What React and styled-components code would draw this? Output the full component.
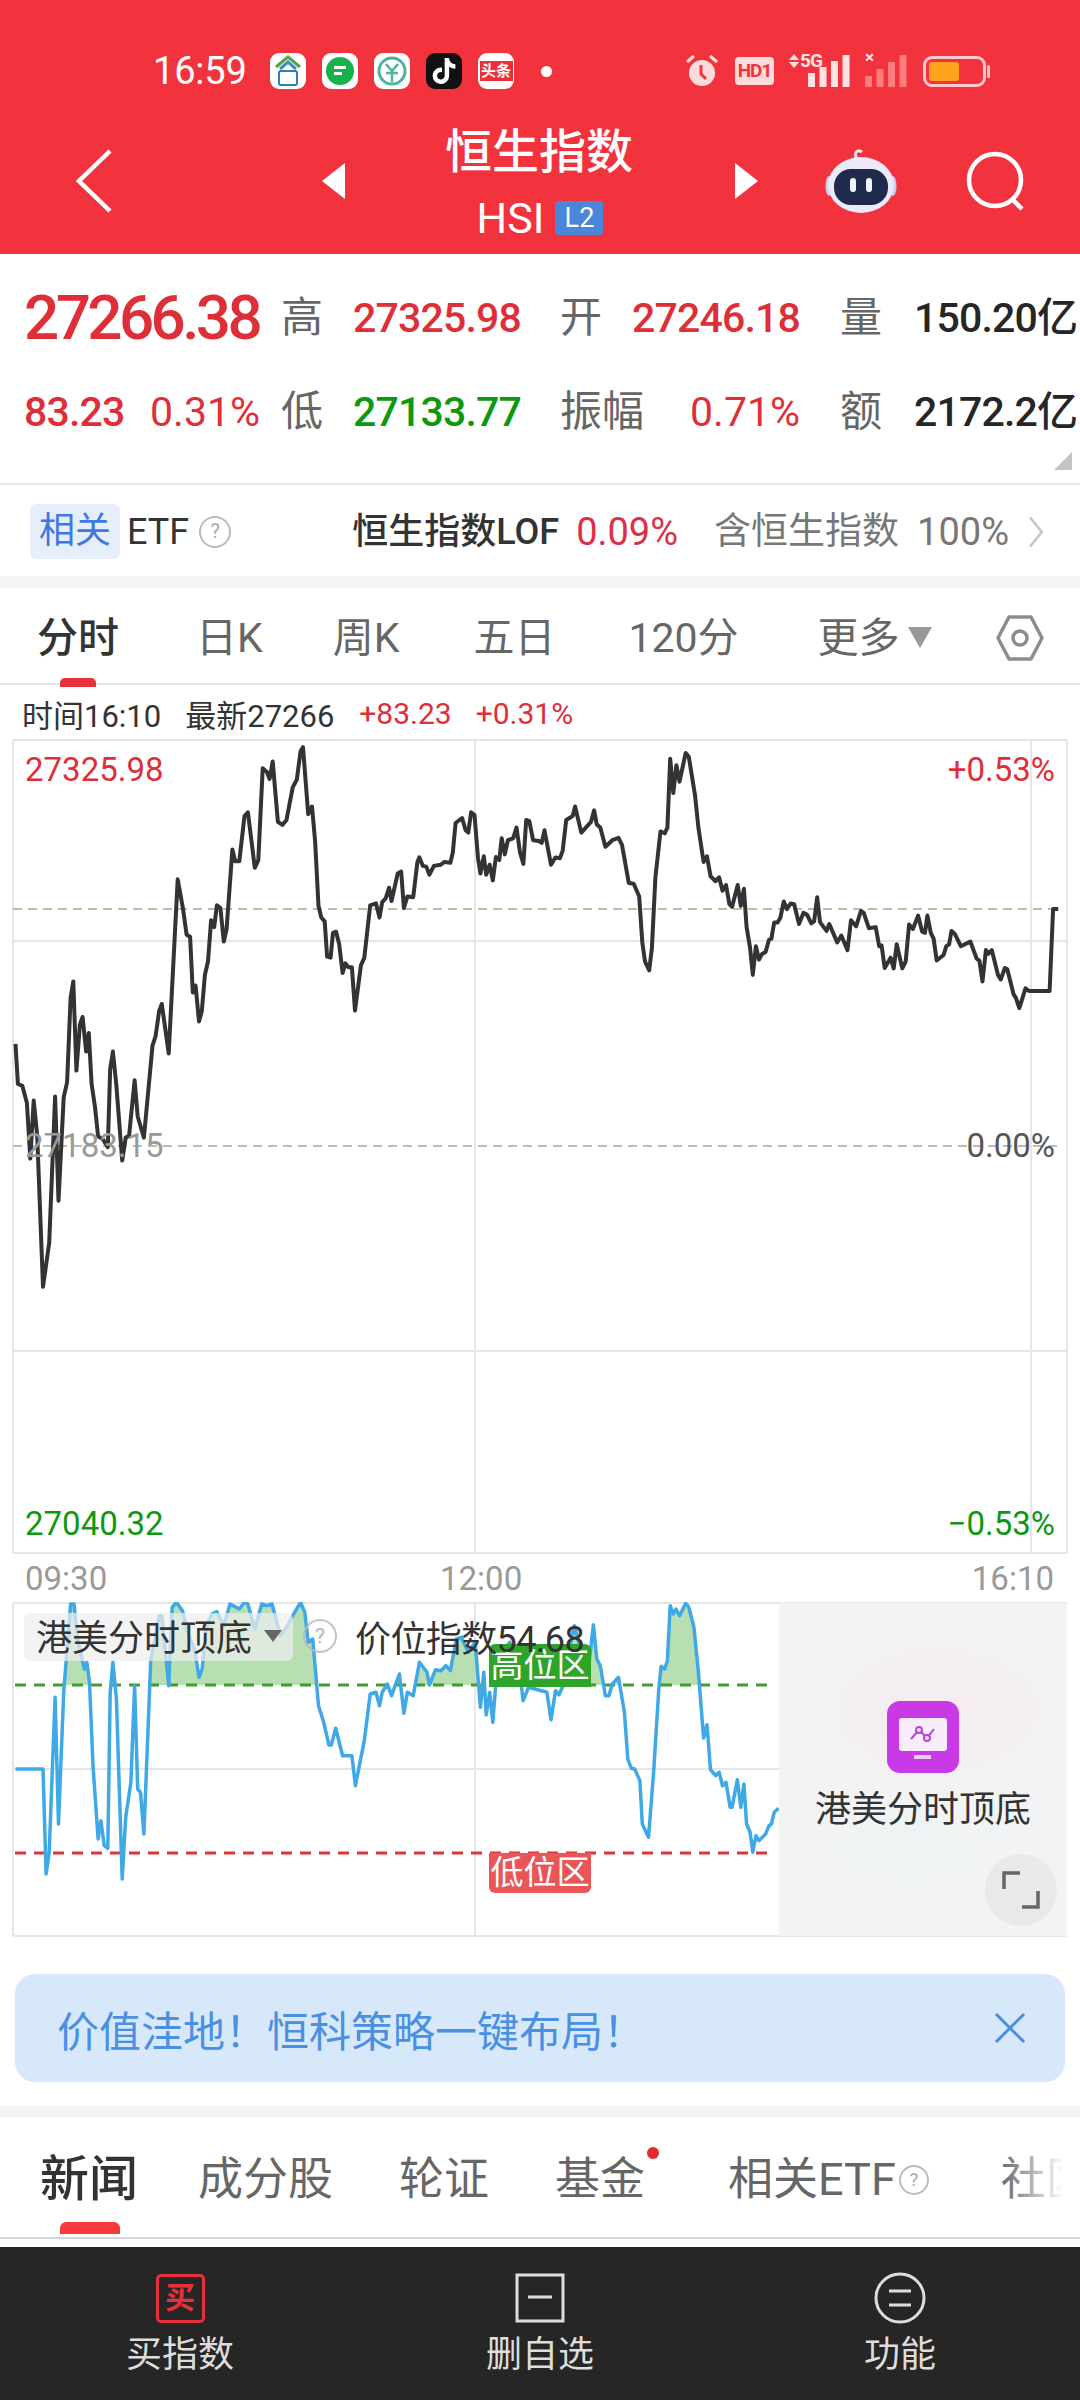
import React from "react"
import styled, { createGlobalStyle } from 'styled-components'
import { FaTiktok } from 'react-icons/fa6'

const FONT = `Roboto, "Noto Sans CJK SC", sans-serif`

const GlobalStyle = createGlobalStyle`
    html, body {
        margin: 0;
        padding: 0;
        background: #fff;
    }
    * {
        box-sizing: border-box;
    }
`

// traced from the reference, in crop pixels. x / 2.904, y / 2.613 + 730
const LEFT_PRICE = `45,820 52,925 65,930 78,975 88,1120 98,968 108,1060 125,1455 143,1340 160,958 170,1230 185,960 195,920 205,700 213,657 222,890 232,770 240,750 250,840 258,792 266,925 276,985 285,1062 298,1068 313,1090 320,885 328,840 338,930 355,1125 365,1065 375,1060 391,915 400,1010 418,1065 443,825 452,800 462,735 470,716 490,845 516,390 532,470 542,535 552,540 560,686 568,668 578,762 586,735 595,640 604,605 613,497 622,515 630,458 640,465 650,553 658,520 675,312 683,343 695,343 710,225 720,215 740,360 750,340 763,100 775,110 783,128 792,82 807,240 820,248 832,235 850,150 862,130 873,55 880,45 895,220 906,200 915,290 925,460 933,490 943,500 950,592 960,595 967,530 976,527 985,560 995,635 1003,610 1012,620 1022,620 1031,733 1048,615 1058,595 1075,458 1092,453 1102,490 1110,450 1120,440 1130,412 1137,447 1155,375 1165,370 1173,465 1183,435 1200,437 1212,345 1218,333 1228,355 1238,357 1247,378 1260,355 1280,352 1290,345 1308,347 1315,320 1323,243 1342,230 1352,262 1360,268 1368,215 1378,222 1388,335 1395,375 1405,330 1412,378 1422,352 1431,393 1440,332 1450,340 1457,283 1466,325 1475,288 1490,283 1500,255 1510,320 1520,350 1528,235 1537,238 1548,288 1565,290`
const RIGHT_PRICE = `5,295 13,262 32,352 45,333 58,335 66,315 76,235 95,225 102,200 120,268 148,240 157,210 165,247 175,255 190,305 210,288 228,282 238,300 258,400 272,402 288,435 297,555 305,605 317,628 325,570 335,385 350,265 362,270 370,255 378,75 387,165 396,92 405,135 423,60 432,70 450,170 460,255 475,345 485,330 495,382 510,395 520,385 530,420 540,405 550,455 558,462 574,405 583,460 592,415 600,515 610,570 618,640 627,565 636,600 645,585 655,580 665,548 672,545 680,503 690,503 698,490 708,448 717,468 728,453 738,455 752,507 765,478 775,482 788,505 796,500 805,437 813,502 832,525 840,507 863,555 875,537 893,575 903,497 918,513 932,473 940,478 955,518 975,515 985,565 992,563 1001,622 1018,595 1027,623 1036,560 1052,623 1062,605 1072,508 1083,520 1098,485 1110,527 1118,530 1125,485 1135,530 1143,545 1152,602 1172,588 1180,565 1188,560 1195,525 1205,533 1222,565 1250,553 1268,597 1276,603 1285,657 1295,575 1302,585 1312,575 1330,640 1338,652 1350,622 1357,625 1375,690 1382,700 1392,727 1410,675 1420,682 1480,682 1490,468 1505,468`
const LEFT_INDEX = `45,630 125,630 134,945 143,880 160,415 170,795 185,400 205,135 215,135 225,240 245,330 252,310 260,370 270,620 285,840 293,785 303,860 313,868 320,400 328,310 338,420 355,960 365,775 380,670 391,380 400,690 408,700 418,825 438,300 450,240 462,170 470,170 490,380 500,145 512,130 530,155 545,220 565,270 578,355 587,330 600,200 615,165 630,158 650,200 668,135 695,150 710,130 720,135 740,210 760,135 775,140 790,135 815,230 835,200 850,170 873,130 885,160 895,250 908,240 925,440 940,490 955,558 962,558 975,508 995,590 1022,590 1032,680 1058,545 1075,405 1092,400 1102,440 1110,400 1125,375 1137,410 1160,345 1173,463 1183,400 1200,410 1218,310 1240,340 1247,378 1265,332 1280,335 1295,320 1308,335 1325,240 1340,235 1360,280 1380,250 1395,445 1405,340 1412,468 1422,400 1431,490 1440,370 1450,300 1480,250 1505,300 1519,425 1535,385`
const RIGHT_INDEX = `20,400 32,482 45,395 55,408 65,385 80,300 100,200 115,260 135,380 155,197 165,300 175,320 190,410 200,410 210,375 228,355 245,460 255,600 265,628 275,630 290,665 297,795 315,835 330,640 345,390 352,322 362,330 370,305 378,140 387,165 395,150 405,170 423,133 432,145 447,205 460,340 475,537 485,497 495,632 510,650 520,640 530,680 540,670 552,745 558,745 573,662 583,745 592,675 600,795 610,820 618,880 627,830 636,845 655,825 665,800 672,795 680,760 693,748`

const mapPoints = (raw, offsetX, offsetY, scaleY) => raw.split(' ').map(p => {
    const [x, y] = p.split(',').map(Number)
    return `${(offsetX + x / 2.904).toFixed(1)},${(offsetY + y / scaleY).toFixed(1)}`
})

// both charts are drawn in page coordinates through their viewBox
const pricePoints = [...mapPoints(LEFT_PRICE, 0, 730, 2.613), ...mapPoints(RIGHT_PRICE, 540, 730, 2.613)].join(' ')
const indexList = [...mapPoints(LEFT_INDEX, 0, 1560, 3), ...mapPoints(RIGHT_INDEX, 540, 1560, 3)]
const indexPoints = indexList.join(' ')
const indexArea = `${indexList.join(' ')} 779,1686 15,1686`

const Page = styled.div`
    width: 1080px;
    height: 2400px;
    overflow: hidden;
    background: #fff;
    font-family: ${FONT};
    color: #333;
`

const Header = styled.header`
    height: 254px;
    background: #f2333d;
    color: #fff;
    overflow: hidden;
`

const StatusBar = styled.div`
    display: flex;
    align-items: center;
    height: 38px;
    margin-top: 52px;
    padding-left: 153px;
`

const Clock = styled.span`
    font-size: 38px;
    line-height: 38px;
    width: 117px;
    letter-spacing: -0.2px;
`

const AppIcons = styled.div`
    display: flex;
    gap: 16px;
`

const AppIcon = styled.span`
    width: 36px;
    height: 36px;
    border-radius: 9px;
    background: ${p => p.$bg || '#fff'};
    display: flex;
    align-items: center;
    justify-content: center;
    color: #fff;
    overflow: hidden;
`

const NewsChip = styled.span`
    width: 33px;
    height: 20px;
    font-size: 15px;
    line-height: 20px;
    font-weight: 700;
    text-align: center;
    color: #fff;
    background: #ee2f37;
    white-space: nowrap;
`

const AppDot = styled.span`
    width: 11px;
    height: 11px;
    border-radius: 50%;
    background: #fff;
    margin-left: 27px;
`

const StatusRight = styled.div`
    display: flex;
    align-items: center;
    margin-left: 133px;
`

const HdTag = styled.span`
    width: 39px;
    height: 28px;
    margin-left: 16px;
    border-radius: 4px;
    background: #ffdcdc;
    color: #f2333d;
    font-size: 19px;
    line-height: 28px;
    font-weight: 700;
    text-align: center;
    letter-spacing: -1px;
`

const SignalWrap = styled.span`
    position: relative;
    width: 61px;
    height: 32px;
    margin-left: 15px;
`

const SignalLabel = styled.span`
    position: absolute;
    left: 11px;
    top: -4px;
    font-size: 19px;
    line-height: 20px;
    font-weight: 700;
    color: #ffe2e2;
    letter-spacing: -0.8px;
`

const SignalArrows = styled.span`
    position: absolute;
    left: 0;
    top: -1px;
    display: flex;
    flex-direction: column;
    gap: 2px;

    &::before, &::after {
        content: "";
        width: 0;
        height: 0;
        border-left: 5px solid transparent;
        border-right: 5px solid transparent;
    }

    &::before {
        border-bottom: 6px solid #ffe2e2;
    }

    &::after {
        border-top: 6px solid #ffe2e2;
    }
`

const NoSignalWrap = styled.span`
    position: relative;
    display: flex;
    margin-left: 14px;
`

const NoSignalMark = styled.span`
    position: absolute;
    left: 1px;
    top: -7px;
    font-size: 17px;
    line-height: 18px;
    font-weight: 700;
    color: #ffe2e2;
`

const Battery = styled.span`
    position: relative;
    width: 63px;
    height: 31px;
    margin-left: 16px;
    border: 3px solid #ffc9c9;
    border-radius: 9px;
    padding: 3px;
    display: block;

    &::before {
        content: "";
        display: block;
        width: 30px;
        height: 19px;
        background: #ffa41c;
        border-radius: 3px;
    }

    &::after {
        content: "";
        position: absolute;
        right: -7px;
        top: 6px;
        width: 3px;
        height: 13px;
        background: #ffc9c9;
        border-radius: 2px;
    }
`

const NavBar = styled.nav`
    display: flex;
    align-items: center;
    margin-top: 37px;
    height: 108px;
    padding-left: 76px;
`

const Arrow = styled.span`
    width: 0;
    height: 0;
    border-top: 18px solid transparent;
    border-bottom: 18px solid transparent;
    ${p => p.$left
        ? 'border-right: 23px solid #fff; margin-left: 210px;'
        : 'border-left: 23px solid #fff;'}
`

const TitleBlock = styled.div`
    width: 390px;
    display: flex;
    flex-direction: column;
    align-items: center;
`

const Title = styled.h1`
    margin: 0 0 0 -2px;
    font-size: 47px;
    line-height: 50px;
    font-weight: 500;
`

const SubTitle = styled.div`
    display: flex;
    align-items: center;
    gap: 11px;
    margin-top: 24px;
    height: 34px;
    font-size: 43px;
    line-height: 34px;
`

const Level = styled.span`
    width: 48px;
    height: 34px;
    background: #4c86d9;
    border-radius: 3px;
    font-size: 27px;
    line-height: 34px;
    text-align: center;
`

const RobotWrap = styled.span`
    margin-left: 67px;
    display: flex;
`

const SearchWrap = styled.span`
    margin-left: 69px;
    display: flex;
`

const Quote = styled.section`
    position: relative;
    height: 231px;
    padding-top: 17px;
    border-bottom: 2px solid #e8e8e8;
`

const QuoteRow = styled.div`
    display: grid;
    grid-template-columns: 255px 72px 207px 240px 278px;
    height: 94px;
    align-items: center;
    padding-left: 26px;
`

const bump = { red: '#de2f38', green: '#0d990f', dark: '#262626' }

const BigPrice = styled.span`
    margin-left: -2px;
    font-size: 62px;
    line-height: 70px;
    font-weight: 500;
    color: ${bump.red};
    letter-spacing: -3.6px;
`

const ChangePair = styled.div`
    display: flex;
    justify-content: space-between;
    margin-left: -2px;
    padding-right: 21px;
`

const Num = styled.span`
    font-size: 41px;
    line-height: 50px;
    font-weight: ${p => p.$bold ? 500 : 400};
    letter-spacing: ${p => p.$bold ? '-0.8px' : '0'};
    color: ${p => bump[p.$tone] || bump.dark};
    white-space: nowrap;
`

const Unit = styled.span`
    letter-spacing: 0;
    font-size: 41px;
`

const QLabel = styled.span`
    font-size: 42px;
    line-height: 50px;
    color: #666;
    white-space: nowrap;
`

const Pair = styled.div`
    display: flex;
    justify-content: space-between;
    padding-left: ${p => p.$inset || 0}px;
`

const CornerMark = styled.span`
    position: absolute;
    right: 8px;
    bottom: 13px;
    width: 0;
    height: 0;
    border-bottom: 18px solid #c4c4c4;
    border-left: 18px solid transparent;
`

const EtfRow = styled.div`
    display: flex;
    align-items: center;
    height: 91px;
    padding: 2px 0 0 30px;
    font-size: 36px;
`

const EtfBadge = styled.span`
    width: 90px;
    height: 55px;
    background: #e6eefc;
    border-radius: 6px;
    color: #3f78e3;
    line-height: 55px;
    text-align: center;
`

const EtfText = styled.span`
    color: ${p => p.$color || '#333'};
    margin-left: ${p => p.$ml || 0}px;
    font-size: ${p => p.$size || 36}px;
    white-space: nowrap;
    line-height: 44px;
    font-weight: ${p => p.$bold ? 500 : 400};
`

const Help = styled.span`
    flex: none;
    display: inline-flex;
    align-items: center;
    justify-content: center;
    width: ${p => p.$size || 32}px;
    height: ${p => p.$size || 32}px;
    margin-left: ${p => p.$ml || 0}px;
    border: 2px solid #bbb;
    border-radius: 50%;
    color: #aaa;
    font-size: ${p => (p.$size || 32) * 0.62}px;
    line-height: 1;
`

const Chevron = styled.span`
    width: 22px;
    height: 22px;
    margin-left: 11px;
    border-top: 3px solid #c6c6c6;
    border-right: 3px solid #c6c6c6;
    transform: scaleX(0.8) rotate(45deg);
`

const Band = styled.div`
    height: ${p => p.$h}px;
    background: #f4f4f4;
`

const PeriodBar = styled.div`
    position: relative;
    display: flex;
    align-items: center;
    height: 97px;
    padding: 4px 0 0 37px;
    border-bottom: 2px solid #e6e6e6;
`

const PeriodTab = styled.span`
    position: relative;
    margin-left: ${p => p.$ml || 0}px;
    font-size: 41px;
    line-height: 50px;
    color: ${p => p.$active ? '#333' : '#666'};
    font-weight: ${p => p.$active ? 500 : 400};
    white-space: nowrap;

    ${p => p.$active && `
        &::after {
            content: "";
            position: absolute;
            left: 23px;
            bottom: -24px;
            width: 36px;
            height: 9px;
            border-radius: 5px 5px 0 0;
            background: #e8303a;
        }
    `}
`

const MoreArrow = styled.span`
    width: 0;
    height: 0;
    margin-left: 8px;
    border-left: 12px solid transparent;
    border-right: 12px solid transparent;
    border-top: 21px solid #999;
`

const HexWrap = styled.span`
    display: flex;
    margin-left: 64px;
`

const InfoLine = styled.div`
    display: flex;
    align-items: center;
    height: 54px;
    padding: 2px 0 0 22px;
    font-size: 31px;
    white-space: nowrap;
`

const InfoText = styled.span`
    margin-left: ${p => p.$ml || 0}px;
    color: ${p => p.$red ? '#de2f38' : '#333'};
    font-size: ${p => p.$red ? 30 : 31}px;
`

const PriceChart = styled.div`
    position: relative;
    height: 815px;
`

const Plot = styled.svg`
    position: absolute;
    left: 0;
    top: 0;
    display: block;
`

const AxisLabel = styled.span`
    position: absolute;
    font-size: 33px;
    line-height: 40px;
    color: ${p => p.$color};
    ${p => p.$side === 'right' ? 'right: 25px;' : 'left: 25px;'}
    top: ${p => p.$top}px;
`

const TimeAxis = styled.div`
    display: grid;
    grid-template-columns: 415px 1fr auto;
    align-items: center;
    height: 48px;
    padding: 0 26px 0 25px;
    font-size: 33px;
    color: #999;
`

const IndexChart = styled.div`
    position: relative;
    height: 335px;
`

const IndexChip = styled.div`
    position: absolute;
    left: 24px;
    top: 11px;
    display: flex;
    align-items: center;
    width: 269px;
    height: 48px;
    padding: 4px 0 0 12px;
    border-radius: 6px;
    background: rgba(238, 238, 238, 0.72);
    font-size: 36px;
    line-height: 44px;
    color: #333;
    white-space: nowrap;
`

const ChipArrow = styled.span`
    width: 0;
    height: 0;
    margin: -6px 0 0 12px;
    border-left: 9px solid transparent;
    border-right: 9px solid transparent;
    border-top: 12px solid #666;
`

const ChipHelp = styled(Help)`
    position: absolute;
    left: 303px;
    top: 17px;
    opacity: 0.85;
`

const IndexValue = styled.span`
    position: absolute;
    left: 355px;
    top: 16px;
    font-size: 36px;
    line-height: 44px;
    color: #333;
    white-space: nowrap;
    z-index: 2;
    letter-spacing: -0.6px;
`

const ZoneTag = styled.span`
    position: absolute;
    left: 489px;
    top: ${p => p.$top}px;
    width: 102px;
    height: ${p => p.$h}px;
    background: ${p => p.$bg};
    border-radius: ${p => p.$radius};
    color: #fff;
    font-size: 33px;
    line-height: ${p => p.$h}px;
    text-align: center;
    white-space: nowrap;
`

const LockPanel = styled.div`
    position: absolute;
    left: 779px;
    top: 1px;
    width: 288px;
    height: 333px;
    display: flex;
    flex-direction: column;
    align-items: center;
    padding-top: 98px;
    background:
        radial-gradient(ellipse 150px 90px at 55% 32%, #f5ebed 0%, rgba(245, 235, 237, 0) 100%),
        radial-gradient(ellipse 140px 70px at 45% 72%, #eff3f4 0%, rgba(239, 243, 244, 0) 100%),
        #f3f3f5;
`

const LockTitle = styled.span`
    margin-top: 17px;
    font-size: 36px;
    line-height: 40px;
    color: #333;
    white-space: nowrap;
`

const ExpandButton = styled.span`
    position: absolute;
    left: 206px;
    top: 251px;
    width: 72px;
    height: 72px;
    border-radius: 50%;
    background: #e9e9e9;
    display: flex;
    align-items: center;
    justify-content: center;
`

const Banner = styled.div`
    display: flex;
    align-items: center;
    justify-content: space-between;
    height: 108px;
    margin: 37px 15px 24px;
    padding: 0 39px 0 42px;
    border-radius: 20px;
    background: #d8e8fb;
    color: #4a90e2;
    font-size: 42px;
    white-space: nowrap;
`

const NewsTabs = styled.div`
    position: relative;
    display: flex;
    align-items: center;
    height: 122px;
    padding: 6px 0 0 40px;
    border-bottom: 2px solid #d4d4d4;
    overflow: hidden;

    &::after {
        content: "";
        position: absolute;
        right: 0;
        top: 0;
        width: 80px;
        height: 118px;
        background: linear-gradient(to right, rgba(255, 255, 255, 0), #fff 80%);
    }
`

const NewsTab = styled.span`
    position: relative;
    display: inline-flex;
    align-items: center;
    margin-left: ${p => p.$ml || 0}px;
    font-size: 45px;
    line-height: 60px;
    color: #666;
    white-space: nowrap;

    ${p => p.$active && `
        font-size: 49px;
        font-weight: 500;
        color: #333;

        &::after {
            content: "";
            position: absolute;
            left: 20px;
            bottom: -24px;
            width: 60px;
            height: 12px;
            border-radius: 6px 6px 0 0;
            background: #f83a3a;
        }
    `}
`

const RedDot = styled.span`
    position: absolute;
    right: -14px;
    top: -3px;
    width: 12px;
    height: 12px;
    border-radius: 50%;
    background: #e8262e;
`

const BottomBar = styled.footer`
    display: grid;
    grid-template-columns: repeat(3, 360px);
    height: 153px;
    margin-top: 8px;
    background: #262626;
`

const BottomItem = styled.div`
    display: flex;
    flex-direction: column;
    align-items: center;
    padding-top: 26px;
    color: #ddd;
    font-size: 36px;
    line-height: 44px;
`

const BottomIcon = styled.span`
    height: 50px;
    margin-bottom: 10px;
    display: flex;
    align-items: center;
    justify-content: center;
`

const BuyIcon = styled.span`
    width: 49px;
    height: 49px;
    border: 3px solid #e8303a;
    border-radius: 5px;
    color: #e8303a;
    font-size: 30px;
    font-weight: 700;
    line-height: 42px;
    text-align: center;
`

const HomeIcon = () => (
    <svg width="28" height="32" viewBox="0 0 28 32">
        <path d="M2 12 L14 2 L26 12" fill="none" stroke="#5aa04a" strokeWidth="3" />
        <path d="M6 14 L14 7 L22 14" fill="none" stroke="#3c8fc4" strokeWidth="3" />
        <rect x="5" y="16" width="18" height="14" rx="2" fill="none" stroke="#2f7fb0" strokeWidth="2" />
    </svg>
)

const BubbleIcon = () => (
    <svg width="30" height="30" viewBox="0 0 30 30">
        <circle cx="15" cy="15" r="14" fill="#17b24b" />
        <rect x="9" y="10" width="12" height="3" fill="#fff" />
        <rect x="9" y="16" width="8" height="3" fill="#fff" />
    </svg>
)

const BankIcon = () => (
    <svg width="32" height="34" viewBox="0 0 32 34">
        <circle cx="16" cy="17" r="13" fill="none" stroke="#4fb1a0" strokeWidth="3" />
        <path d="M10 10 L16 17 L22 10 M16 17 V28 M10 19 H22" fill="none" stroke="#4fb1a0" strokeWidth="2.5" />
    </svg>
)

const AlarmIcon = () => (
    <svg width="34" height="34" viewBox="0 0 34 34">
        <circle cx="17" cy="19" r="13" fill="#ffdcdc" />
        <path d="M2 8 L9 2 M32 8 L25 2" stroke="#ffdcdc" strokeWidth="3" />
        <path d="M16 11 V20 L21 25" fill="none" stroke="#f2333d" strokeWidth="3" />
    </svg>
)

const SignalBars = ({ color, x = 0, width = 61, bars = [12, 19, 25, 32] }) => (
    <svg width={width} height="32" viewBox={`0 0 ${width} 32`}>
        {bars.map((h, i) => (
            <rect key={i} x={x + i * 11.5} y={32 - h} width="7" height={h} fill={color} />
        ))}
    </svg>
)

const BackIcon = () => (
    <svg width="36" height="64" viewBox="0 0 36 64">
        <path d="M34 2 L3 32 L34 62" fill="none" stroke="#fff" strokeWidth="4.5" />
    </svg>
)

const RobotIcon = () => (
    <svg width="72" height="66" viewBox="0 0 72 66">
        <path d="M32 11 C28 4 33 1 37 4" fill="none" stroke="#e8e6f5" strokeWidth="3" />
        <ellipse cx="4" cy="38" rx="3.5" ry="10" fill="#c9ccf3" />
        <ellipse cx="68" cy="38" rx="3.5" ry="10" fill="#c9ccf3" />
        <ellipse cx="36" cy="37" rx="33" ry="28" fill="#eceaf8" />
        <rect x="9" y="21" width="54" height="36" rx="17" fill="#1f2a4d" />
        <rect x="25" y="30" width="6" height="14" rx="3" fill="#f4f4ff" />
        <rect x="41" y="30" width="6" height="14" rx="3" fill="#f4f4ff" />
    </svg>
)

const SearchIcon = () => (
    <svg width="60" height="60" viewBox="0 0 60 60">
        <ellipse cx="29" cy="29" rx="26" ry="26" fill="none" stroke="#fff" strokeWidth="4.5" />
        <path d="M46 48 L56 58" stroke="#fff" strokeWidth="4.5" />
    </svg>
)

const HexIcon = () => (
    <svg width="48" height="46" viewBox="0 0 48 46">
        <path d="M13 2 H35 L46 23 L35 44 H13 L2 23 Z" fill="none" stroke="#8c8c8c" strokeWidth="3.5" strokeLinejoin="round" />
        <circle cx="24" cy="23" r="7" fill="none" stroke="#8c8c8c" strokeWidth="3.5" />
    </svg>
)

const ScreenIcon = () => (
    <svg width="72" height="72" viewBox="0 0 72 72">
        <rect width="72" height="72" rx="13" fill="#c93ae6" />
        <rect x="12" y="17" width="48" height="33" rx="3" fill="#f8ebfc" />
        <rect x="27" y="54" width="17" height="4" fill="#f1c9f8" />
        <path d="M24 38 L32 29 L40 37 L47 28" fill="none" stroke="#b347cf" strokeWidth="2" />
        <circle cx="32" cy="29" r="3" fill="#f8ebfc" stroke="#b347cf" strokeWidth="2" />
        <circle cx="40" cy="37" r="3" fill="#f8ebfc" stroke="#b347cf" strokeWidth="2" />
    </svg>
)

const ExpandIcon = () => (
    <svg width="38" height="38" viewBox="0 0 38 38">
        <path d="M2 18 V2 H18 M36 20 V36 H20" fill="none" stroke="#666" strokeWidth="3.5" />
    </svg>
)

const CloseIcon = () => (
    <svg width="32" height="32" viewBox="0 0 32 32">
        <path d="M2 2 L30 30 M30 2 L2 30" stroke="#4a90e2" strokeWidth="3" />
    </svg>
)

const WatchIcon = () => (
    <svg width="50" height="50" viewBox="0 0 50 50">
        <rect x="2" y="2" width="46" height="46" fill="none" stroke="#ddd" strokeWidth="3" />
        <path d="M13 24 H37" stroke="#ddd" strokeWidth="3" />
    </svg>
)

const MenuIcon = () => (
    <svg width="52" height="52" viewBox="0 0 52 52">
        <circle cx="26" cy="26" r="24" fill="none" stroke="#ddd" strokeWidth="3" />
        <path d="M15 19 H37 M15 33 H37" stroke="#ddd" strokeWidth="3" />
    </svg>
)

const PriceGraph = () => (
    <Plot width="1080" height="815" viewBox="0 739 1080 815">
        <g stroke="#e6e6e6" strokeWidth="2" fill="none">
            <path d="M13 740 H1067 M13 941 H1067 M13 1351 H1067 M13 1553 H1067" />
            <path d="M13 740 V1553 M475 740 V1553 M1031 740 V1553 M1067 740 V1553" />
        </g>
        <path d="M13 909 H1062" stroke="#b3a584" strokeWidth="1.5" strokeDasharray="9 6" />
        <path d="M13 1146 H1062" stroke="#a5a5a5" strokeWidth="1.5" strokeDasharray="9 6" />
        <polyline points={pricePoints} fill="none" stroke="#333" strokeWidth="4" strokeLinejoin="round" />
    </Plot>
)

const IndexGraph = () => (
    <Plot width="1080" height="335" viewBox="0 1603 1080 335">
        <defs>
            <clipPath id="above-high">
                <rect x="0" y="1603" width="779" height="83" />
            </clipPath>
        </defs>
        <g stroke="#e6e6e6" strokeWidth="2" fill="none">
            <path d="M13 1604 H1067 M13 1770 H779 M13 1937 H1067" />
            <path d="M13 1604 V1937 M475 1604 V1937" />
        </g>
        <polygon points={indexArea} fill="#b7dfb2" clipPath="url(#above-high)" />
        <path d="M15 1686 H775" stroke="#3f9e2f" strokeWidth="3" strokeDasharray="11 8" />
        <path d="M15 1854 H775" stroke="#e0343c" strokeWidth="3" strokeDasharray="11 8" />
        <polyline points={indexPoints} fill="none" stroke="#3fa9e8" strokeWidth="3.5" strokeLinejoin="round" />
    </Plot>
)

const App = () => {
    return (
        <Page>
            <GlobalStyle />
            <Header>
                <StatusBar>
                    <Clock>16:59</Clock>
                    <AppIcons>
                        <AppIcon><HomeIcon /></AppIcon>
                        <AppIcon><BubbleIcon /></AppIcon>
                        <AppIcon><BankIcon /></AppIcon>
                        <AppIcon $bg="#111"><FaTiktok size={26} /></AppIcon>
                        <AppIcon><NewsChip>头条</NewsChip></AppIcon>
                    </AppIcons>
                    <AppDot />
                    <StatusRight>
                        <AlarmIcon />
                        <HdTag>HD1</HdTag>
                        <SignalWrap>
                            <SignalArrows />
                            <SignalLabel>5G</SignalLabel>
                            <SignalBars color="#ffe2e2" x={19} bars={[14, 20, 26, 32]} />
                        </SignalWrap>
                        <NoSignalWrap>
                            <NoSignalMark>×</NoSignalMark>
                            <SignalBars color="#ff7c7c" width={43} x={1} bars={[11, 18, 25, 32]} />
                        </NoSignalWrap>
                        <Battery />
                    </StatusRight>
                </StatusBar>
                <NavBar>
                    <BackIcon />
                    <Arrow $left />
                    <TitleBlock>
                        <Title>恒生指数</Title>
                        <SubTitle>HSI<Level>L2</Level></SubTitle>
                    </TitleBlock>
                    <Arrow />
                    <RobotWrap><RobotIcon /></RobotWrap>
                    <SearchWrap><SearchIcon /></SearchWrap>
                </NavBar>
            </Header>

            <Quote>
                <QuoteRow>
                    <BigPrice>27266.38</BigPrice>
                    <QLabel>高</QLabel>
                    <Num $tone="red" $bold>27325.98</Num>
                    <Pair><QLabel>开</QLabel><Num $tone="red" $bold>27246.18</Num></Pair>
                    <Pair $inset={40}><QLabel>量</QLabel><Num $bold>150.20<Unit>亿</Unit></Num></Pair>
                </QuoteRow>
                <QuoteRow>
                    <ChangePair>
                        <Num $tone="red" $bold>83.23</Num>
                        <Num $tone="red">0.31%</Num>
                    </ChangePair>
                    <QLabel>低</QLabel>
                    <Num $tone="green" $bold>27133.77</Num>
                    <Pair><QLabel>振幅</QLabel><Num $tone="red">0.71%</Num></Pair>
                    <Pair $inset={40}><QLabel>额</QLabel><Num $bold>2172.2<Unit>亿</Unit></Num></Pair>
                </QuoteRow>
                <CornerMark />
            </Quote>

            <EtfRow>
                <EtfBadge>相关</EtfBadge>
                <EtfText $ml={7}>ETF</EtfText>
                <Help $ml={10}>?</Help>
                <EtfText $ml={121} $bold>恒生指数LOF</EtfText>
                <EtfText $ml={17} $size={38} $color="#de2f48">0.09%</EtfText>
                <EtfText $ml={36} $size={37} $color="#777">含恒生指数</EtfText>
                <EtfText $ml={18} $size={38} $color="#777">100%</EtfText>
                <Chevron />
            </EtfRow>
            <Band $h={12} />

            <PeriodBar>
                <PeriodTab $active>分时</PeriodTab>
                <PeriodTab $ml={77}>日K</PeriodTab>
                <PeriodTab $ml={70}>周K</PeriodTab>
                <PeriodTab $ml={74}>五日</PeriodTab>
                <PeriodTab $ml={73}>120分</PeriodTab>
                <PeriodTab $ml={79}>更多</PeriodTab>
                <MoreArrow />
                <HexWrap><HexIcon /></HexWrap>
            </PeriodBar>

            <InfoLine>
                <InfoText>时间16:10</InfoText>
                <InfoText $ml={24}>最新27266</InfoText>
                <InfoText $ml={25} $red>+83.23</InfoText>
                <InfoText $ml={24} $red>+0.31%</InfoText>
            </InfoLine>

            <PriceChart>
                <PriceGraph />
                <AxisLabel $top={11} $color="#de2f38">27325.98</AxisLabel>
                <AxisLabel $top={11} $side="right" $color="#de2f38">+0.53%</AxisLabel>
                <AxisLabel $top={387} $color="#999">27183.15</AxisLabel>
                <AxisLabel $top={387} $side="right" $color="#555">0.00%</AxisLabel>
                <AxisLabel $top={765} $color="#0d990f">27040.32</AxisLabel>
                <AxisLabel $top={765} $side="right" $color="#0d990f">−0.53%</AxisLabel>
            </PriceChart>

            <TimeAxis>
                <span>09:30</span>
                <span>12:00</span>
                <span>16:10</span>
            </TimeAxis>

            <IndexChart>
                <IndexGraph />
                <IndexChip>港美分时顶底<ChipArrow /></IndexChip>
                <ChipHelp $size={34}>?</ChipHelp>
                <ZoneTag $top={42} $h={43} $bg="#2ea52a" $radius="6px 6px 0 0">高位区</ZoneTag>
                <ZoneTag $top={251} $h={40} $bg="#ea5558" $radius="0 0 6px 6px">低位区</ZoneTag>
                <IndexValue>价位指数54.68</IndexValue>
                <LockPanel>
                    <ScreenIcon />
                    <LockTitle>港美分时顶底</LockTitle>
                    <ExpandButton><ExpandIcon /></ExpandButton>
                </LockPanel>
            </IndexChart>

            <Banner>
                <span>价值洼地！恒科策略一键布局！</span>
                <CloseIcon />
            </Banner>
            <Band $h={11} />

            <NewsTabs>
                <NewsTab $active>新闻</NewsTab>
                <NewsTab $ml={60}>成分股</NewsTab>
                <NewsTab $ml={66}>轮证</NewsTab>
                <NewsTab $ml={66}>基金<RedDot /></NewsTab>
                <NewsTab $ml={83}>相关ETF<Help $size={30} $ml={3}>?</Help></NewsTab>
                <NewsTab $ml={72}>社区</NewsTab>
            </NewsTabs>

            <BottomBar>
                <BottomItem>
                    <BottomIcon><BuyIcon>买</BuyIcon></BottomIcon>
                    买指数
                </BottomItem>
                <BottomItem>
                    <BottomIcon><WatchIcon /></BottomIcon>
                    删自选
                </BottomItem>
                <BottomItem>
                    <BottomIcon><MenuIcon /></BottomIcon>
                    功能
                </BottomItem>
            </BottomBar>
        </Page>
    )
}

export default App
